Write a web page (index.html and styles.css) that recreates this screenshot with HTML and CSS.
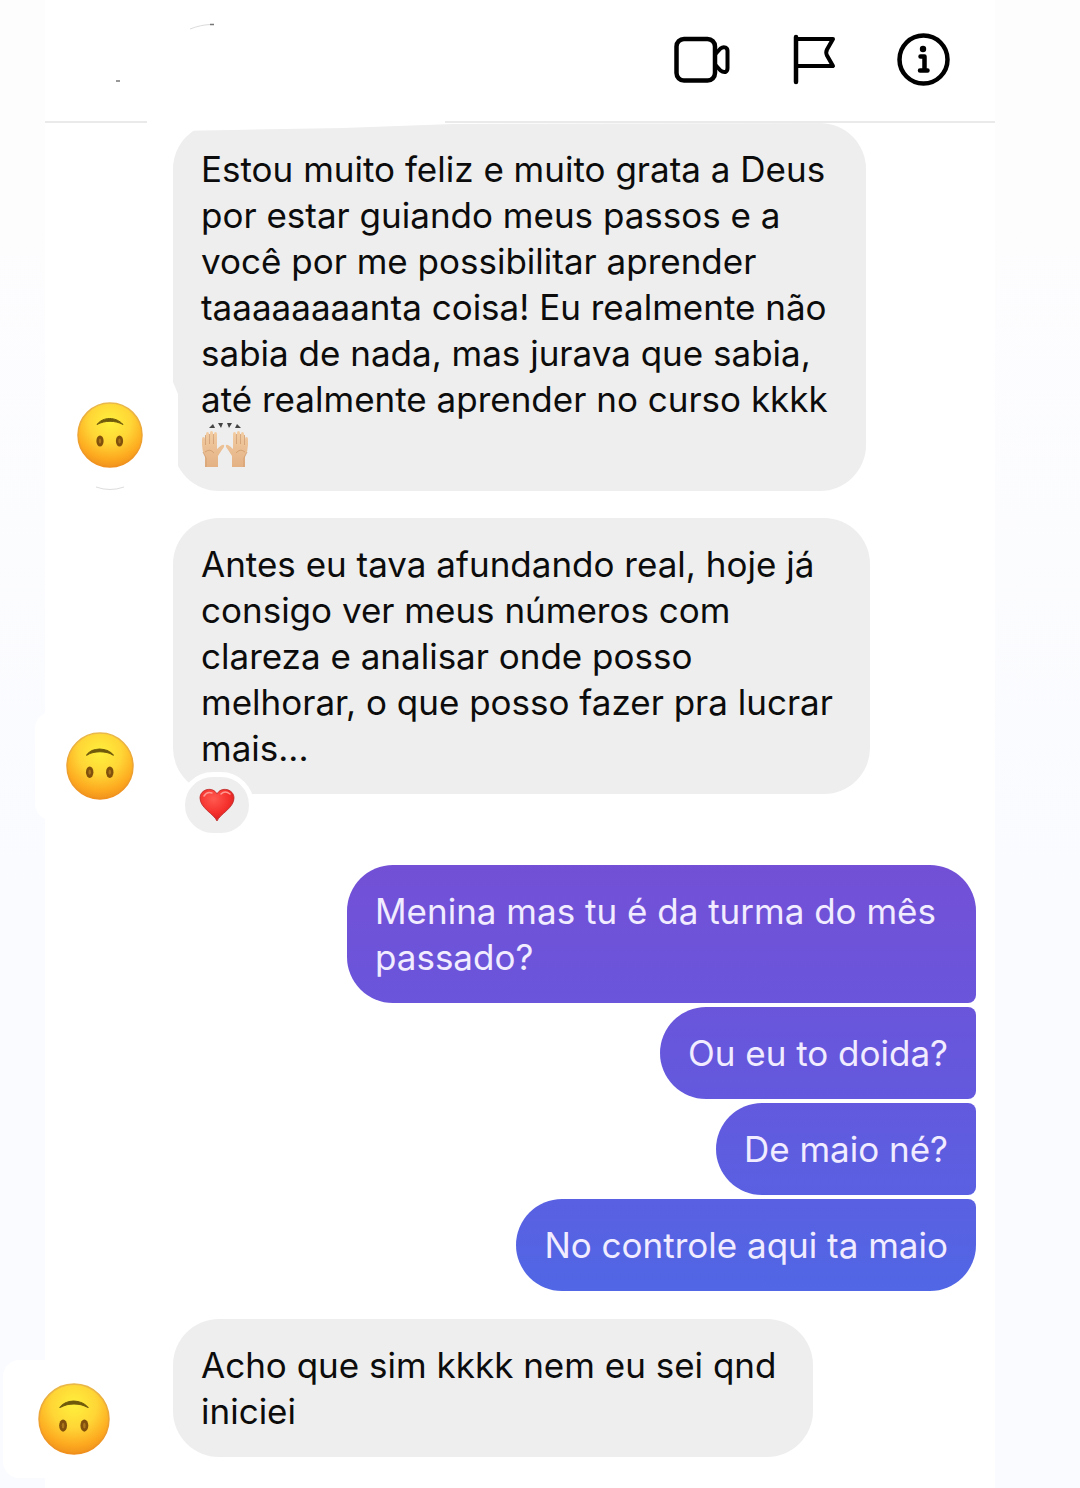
FILE: index.html
```html
<!doctype html>
<html lang="pt-BR">

<head>
	<meta charset="utf-8" />
	<meta name="viewport" content="width=device-width, initial-scale=1">
	<title>Chat</title>
	<link rel="stylesheet" href="styles.css">
</head>

<body>

	<!-- shared emoji drawing for the avatars -->
	<svg class="defs" aria-hidden="true">
		<defs>
			<radialGradient id="face" cx="50%" cy="30%" r="72%">
				<stop offset="0" stop-color="#fff03c" />
				<stop offset="0.45" stop-color="#ffd636" />
				<stop offset="0.8" stop-color="#fda91f" />
				<stop offset="1" stop-color="#ee8f1c" />
			</radialGradient>
			<linearGradient id="rim" x1="0" y1="0" x2="0" y2="1">
				<stop offset="0" stop-color="#e9b94a" />
				<stop offset="1" stop-color="#f08f1c" />
			</linearGradient>
			<radialGradient id="heart" cx="40%" cy="30%" r="75%">
				<stop offset="0" stop-color="#ff5a50" />
				<stop offset="0.6" stop-color="#f5302c" />
				<stop offset="1" stop-color="#cf1c1c" />
			</radialGradient>
			<linearGradient id="skin" x1="0" y1="0" x2="0" y2="1">
				<stop offset="0" stop-color="#f3cda3" />
				<stop offset="1" stop-color="#e3b184" />
			</linearGradient>
			<symbol id="upside-down" viewBox="0 0 66 66">
				<circle cx="33" cy="33" r="32" fill="url(#face)" stroke="url(#rim)" stroke-width="1.5" />
				<path d="M20 22.500C26 14.500 39 14.500 46 22.500C38 18.200 28 18.200 20 22.500Z" fill="#6f5a0c" stroke="#6f5a0c" stroke-width="1" stroke-linejoin="round" />
				<ellipse cx="23" cy="39" rx="3.600" ry="5.600" fill="#80500c" />
				<ellipse cx="42.500" cy="39" rx="3.600" ry="5.600" fill="#80500c" />
				<ellipse cx="23" cy="39" rx="1.200" ry="2.600" fill="#ab751c" />
				<ellipse cx="42.500" cy="39" rx="1.200" ry="2.600" fill="#ab751c" />
			</symbol>
		</defs>
	</svg>

	<header class="header">
		<svg class="marks" viewBox="0 0 110 66" aria-hidden="true">
			<path d="M82 13C90 10 95 9 102 8.500" fill="none" stroke="#dcdcdc" />
			<path d="M102 8.500h4" stroke="#777" stroke-width="1.500" />
			<path d="M8 65h4" stroke="#777" stroke-width="1.500" />
		</svg>
		<nav class="actions">
			<button type="button" aria-label="Video">
				<svg width="58" height="56" viewBox="0 0 58 56" fill="none" stroke="#000" stroke-width="4.500" stroke-linejoin="round">
					<rect x="4.500" y="9" width="38.500" height="41.500" rx="7.500" />
					<path d="M43 24.500L48.500 18.500Q51 16.500 53.500 17.500Q55.500 18.500 55.500 21V38Q55.500 41 53.500 42Q51 42.500 48.500 40.500L43 34.500" stroke-width="4" />
				</svg>
			</button>
			<button type="button" aria-label="Denunciar">
				<svg width="46" height="56" viewBox="0 0 46 56" fill="none" stroke="#000" stroke-width="4.500" stroke-linecap="round" stroke-linejoin="round">
					<path d="M6 7V52" />
					<path d="M6 9H43L37 19.500Q35.500 22.500 37 25.500L43 36H6" stroke-width="4" />
				</svg>
			</button>
			<button type="button" aria-label="Detalhes">
				<svg width="56" height="56" viewBox="0 0 56 56" fill="none" stroke="#000" stroke-width="4.500">
					<circle cx="27.500" cy="29.500" r="24" />
					<circle cx="27" cy="19" r="3.200" fill="#000" stroke="none" />
					<path d="M24.500 26.500H28.500V40M24 40.500H31.500" stroke-linecap="round" stroke-linejoin="round" />
				</svg>
			</button>
		</nav>
	</header>

	<main class="chat">

		<div class="row row-first">
			<div class="avatar">
				<svg width="66" height="66" role="img" aria-label="Avatar"><use href="#upside-down" /></svg>
				<svg class="arc" width="30" height="5" viewBox="0 0 30 5" aria-hidden="true"><path d="M1 1Q15 6 29 1" fill="none" stroke="#ddd" /></svg>
			</div>
			<p class="bubble bubble-cut">
				Estou muito feliz e muito grata a Deus<br>
				por estar guiando meus passos e a<br>
				você por me possibilitar aprender<br>
				taaaaaaaanta coisa! Eu realmente não<br>
				sabia de nada, mas jurava que sabia,<br>
				até realmente aprender no curso kkkk<br>
				<svg class="hands" width="48" height="46" viewBox="0 0 48 46" role="img" aria-label="Mãos para cima">
					<g id="hand">
						<path d="M4 45V34Q1 29 1 23V17Q1 15 2.500 15T4 17V24L5 12Q5 10 6.500 10T8 12V22L9 11Q9 9 10.500 9T12 11V22L13 12Q13 10 14.500 10T16 12V27Q19 24 21 23Q24 22 23 25Q20 29 17 34V45Z" fill="url(#skin)" />
						<path d="M4.500 13V23M8.500 12V22M12.500 12V22M4 30Q9 26 13 31M2 30L5 36V45" fill="none" stroke="#cf9a6c" stroke-width="0.800" />
						<path d="M8 6L12 2L14 6ZM17 1L22 1L20 6Z" fill="#444" />
					</g>
					<use href="#hand" transform="matrix(-1 0 0 1 48 0)" />
				</svg>
			</p>
		</div>

		<div class="row row-second">
			<div class="avatar">
				<svg width="68" height="68" role="img" aria-label="Avatar"><use href="#upside-down" /></svg>
			</div>
			<div class="bubble bubble-wide">
				Antes eu tava afundando real, hoje já<br>
				consigo ver meus números com<br>
				clareza e analisar onde posso<br>
				melhorar, o que posso fazer pra lucrar<br>
				mais...
				<span class="reaction">
					<svg width="36" height="34" viewBox="0 0 36 34" role="img" aria-label="Coração">
						<path d="M18 33C15 26 1 20 1 10C1 1 14-2 18 6C22-2 35 1 35 10C35 20 21 26 18 33Z" fill="url(#heart)" stroke="#b92a2a" stroke-width="0.800" />
						<path d="M5 8Q8 3 13 5M22 6Q26 2 31 6" fill="none" stroke="#ff9a92" stroke-width="1.500" stroke-linecap="round" />
					</svg>
				</span>
			</div>
		</div>

		<div class="sent">
			<p class="bubble bubble-question">Menina mas tu é da turma do mês<br>passado?</p>
			<p class="bubble">Ou eu to doida?</p>
			<p class="bubble">De maio né?</p>
			<p class="bubble">No controle aqui ta maio</p>
		</div>

		<div class="row row-last">
			<div class="avatar">
				<svg width="72" height="72" role="img" aria-label="Avatar"><use href="#upside-down" /></svg>
			</div>
			<p class="bubble bubble-short">Acho que sim kkkk nem eu sei qnd<br>iniciei</p>
		</div>

	</main>

</body>

</html>
```
FILE: styles.css
```css
* {
	box-sizing: border-box;
}

body {
	margin: 0;
	min-height: 100vh;
	font-family: Inter, "Liberation Sans", sans-serif;
	font-size: 35px;
	line-height: 46px;
	color: #0c0c0c;
	background: linear-gradient(#fff, #fff) 45px 0 / calc(100% - 130px) 100% no-repeat,
		linear-gradient(#fdfdfe 207px, #fafbff 900px);
}

.defs {
	position: absolute;
	width: 0;
	height: 0;
}

.header {
	display: flex;
	justify-content: space-between;
	align-items: flex-start;
	height: 123px;
	margin: 0 85px 0 45px;
	padding: 30px 43px 0 63px;
	background: linear-gradient(#eaeaea, #eaeaea) 0 100% / 102px 2px no-repeat,
		linear-gradient(#eaeaea, #eaeaea) 100% 100% / calc(100% - 400px) 2px no-repeat;
}

.marks {
	width: 110px;
	height: 66px;
	margin-top: -14px;
}

.actions {
	display: flex;
	gap: 60px;
}

.actions button {
	display: block;
	padding: 0;
	border: 0;
	background: none;
	cursor: pointer;
}

.actions svg {
	display: block;
}

.row {
	display: grid;
	grid-template-columns: 173px 1fr;
	align-items: start;
}

.bubble {
	position: relative;
	justify-self: start;
	margin: 0;
	padding: 23px 28px;
	border-radius: 46px;
	background: #eee;
	white-space: nowrap;
}

.avatar {
	align-self: end;
	justify-self: start;
	background: #fff;
	border-radius: 16px;
}

.avatar svg {
	display: block;
}

.row-first .avatar {
	margin-left: 77px;
}

.arc {
	margin: 18px auto 0;
}

/* top edge slopes up towards the right, left edge steps in near the bottom */
.bubble-cut {
	width: 693px;
	clip-path: polygon(0 8px, 60px 7px, 170px 5px, 280px 1px, 100% 0, 100% 100%, 5px 100%, 5px 271px, 0 259px);
}

.hands {
	display: block;
}

.row-second {
	margin-top: 27px;
	padding-bottom: 43px;
}

.row-second .avatar {
	margin: 0 0 -26px 35px;
	padding: 20px 31px;
}

.bubble-wide {
	width: 697px;
}

.reaction {
	position: absolute;
	left: 7px;
	bottom: -44px;
	display: flex;
	align-items: center;
	justify-content: center;
	width: 74px;
	height: 66px;
	border: 5px solid #fff;
	border-radius: 33px;
	background: #eee;
}

.sent {
	display: flex;
	flex-direction: column;
	align-items: flex-end;
	gap: 4px;
	margin: 28px 104px 28px 173px;
}

/* one gradient runs behind all the sent bubbles */
.sent .bubble {
	border-radius: 46px 8px 8px 46px;
	color: #f1ecff;
	background: linear-gradient(#7350d6 58%, #6359de 74%, #5067e5 87%) fixed;
}

.sent .bubble:first-child {
	border-top-right-radius: 46px;
}

.sent .bubble:last-child {
	border-bottom-right-radius: 46px;
}

.bubble-question {
	width: 629px;
}

.row-last {
	padding-bottom: 31px;
}

.row-last .avatar {
	margin: -60px 0 -21px 3px;
	padding: 23px 35px;
}

.bubble-short {
	width: 640px;
}
```
